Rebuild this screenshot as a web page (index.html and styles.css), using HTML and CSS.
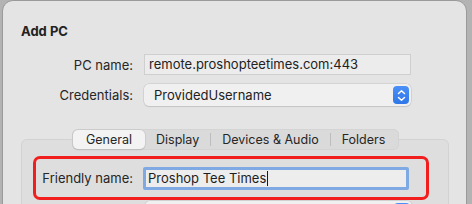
FILE: index.html
```html
<!DOCTYPE html>
<html>
<head>
<meta charset="utf-8">
<link rel="stylesheet" href="styles.css">
</head>
<body>
<div class="window">
  <div class="title">Add PC</div>
  <div class="form">
    <label class="label">PC name:</label>
    <div class="field">remote.proshopteetimes.com:443</div>
    <label class="label">Credentials:</label>
    <div class="popup">
      <span>ProvidedUsername</span>
      <span class="stepper">
        <svg width="9" height="13" viewBox="0 0 9 13"><path d="M1.5 4.5 L4.5 1.8 L7.5 4.5 M1.5 8.5 L4.5 11.2 L7.5 8.5" fill="none" stroke="#fff" stroke-width="1.5" stroke-linecap="round" stroke-linejoin="round"/></svg>
      </span>
    </div>
  </div>
  <div class="tabs">
    <div class="tab selected">General</div>
    <div class="tab">Display</div>
    <div class="sep"></div>
    <div class="tab">Devices &amp; Audio</div>
    <div class="sep"></div>
    <div class="tab last">Folders</div>
  </div>
  <div class="panel">
    <div class="highlight">
      <label class="label">Friendly name:</label>
      <div class="field focus">Proshop Tee Times<span class="caret"></span></div>
    </div>
    <div class="next-row">
      <div class="spacer"></div>
      <div class="popup">
        <span></span>
        <span class="stepper"></span>
      </div>
    </div>
  </div>
</div>
</body>
</html>
```

FILE: styles.css
```css
html, body {
  margin: 0;
  padding: 0;
  width: 472px;
  height: 204px;
  overflow: hidden;
}
body {
  background: #b3b3b3;
  font-family: "Inter", "Liberation Sans", sans-serif;
  font-size: 13px;
  color: #252525;
}
.window {
  margin: 0 0 0 2px;
  width: 465px;
  height: 260px;
  box-sizing: border-box;
  background: #e4e4e4;
  border: 1px solid #9a9a9a;
  border-radius: 11px;
  overflow: hidden;
}
.title {
  font-weight: 700;
  font-size: 13px;
  line-height: 16px;
  margin: 22px 0 0 18px;
  color: #222;
}
.form {
  display: grid;
  grid-template-columns: 112px 267px;
  column-gap: 11px;
  row-gap: 9px;
  margin: 15px 0 0 18px;
  align-items: center;
}
.label {
  text-align: right;
  color: #262626;
  white-space: nowrap;
}
.field {
  height: 21px;
  box-sizing: border-box;
  background: #ececec;
  border: 1px solid #cfcfcf;
  padding: 0 0 0 4px;
  line-height: 19px;
  color: #222;
  white-space: nowrap;
}
.popup {
  height: 22px;
  box-sizing: border-box;
  background: #f0f0f0;
  border-radius: 5px;
  box-shadow: 0 0 0 0.5px #c4c4c4, 0 1px 1px rgba(0,0,0,0.12);
  display: flex;
  align-items: center;
  justify-content: space-between;
  padding: 0 2px 0 10px;
  color: #222;
}
.stepper {
  width: 16px;
  height: 18px;
  background: linear-gradient(#4a90f7, #2f76e8);
  border-radius: 4px;
  display: flex;
  align-items: center;
  justify-content: center;
}
.tabs {
  position: relative;
  z-index: 1;
  display: flex;
  align-items: center;
  width: max-content;
  margin: 23px 0 0 69px;
  height: 21px;
  padding: 0 1px;
  background: #dadada;
  border-radius: 6px;
  box-shadow: inset 0 0 0 0.5px #cdcdcd;
  font-size: 12.5px;
}
.tab {
  height: 19px;
  line-height: 19px;
  padding: 0 11px;
  color: #262626;
  border-radius: 5px;
}
.tab.last {
  padding-right: 13px;
}
.tab.selected {
  background: #f3f3f3;
  box-shadow: 0 0 0 0.5px #c3c3c3, 0 1px 1.5px rgba(0,0,0,0.15);
  padding: 0 13px;
}
.sep {
  width: 1px;
  height: 13px;
  background: #bdbdbd;
}
.panel {
  margin: -11px 0 0 18px;
  width: 428px;
  height: 120px;
  box-sizing: border-box;
  background: #dedede;
  border: 1px solid #d2d2d2;
  border-radius: 6px;
  padding: 16px 0 0 11px;
}
.highlight {
  width: 396px;
  height: 44px;
  box-sizing: border-box;
  border: 3.5px solid #f21d1d;
  border-radius: 7px;
  display: grid;
  grid-template-columns: 96px 266px;
  column-gap: 10px;
  align-items: center;
  padding: 0 0 0 1px;
}
.field.focus {
  height: 23px;
  border: 3px solid #7ea9e3;
  border-radius: 2px;
  background: #ededed;
  line-height: 17px;
  padding-left: 2px;
  color: #1e1e1e;
}
.caret {
  display: inline-block;
  width: 1px;
  height: 15px;
  background: #1a1a1a;
  vertical-align: -3px;
  margin-left: 1px;
}
.next-row {
  display: grid;
  grid-template-columns: 112px 267px;
  margin-top: 1px;
}
```
